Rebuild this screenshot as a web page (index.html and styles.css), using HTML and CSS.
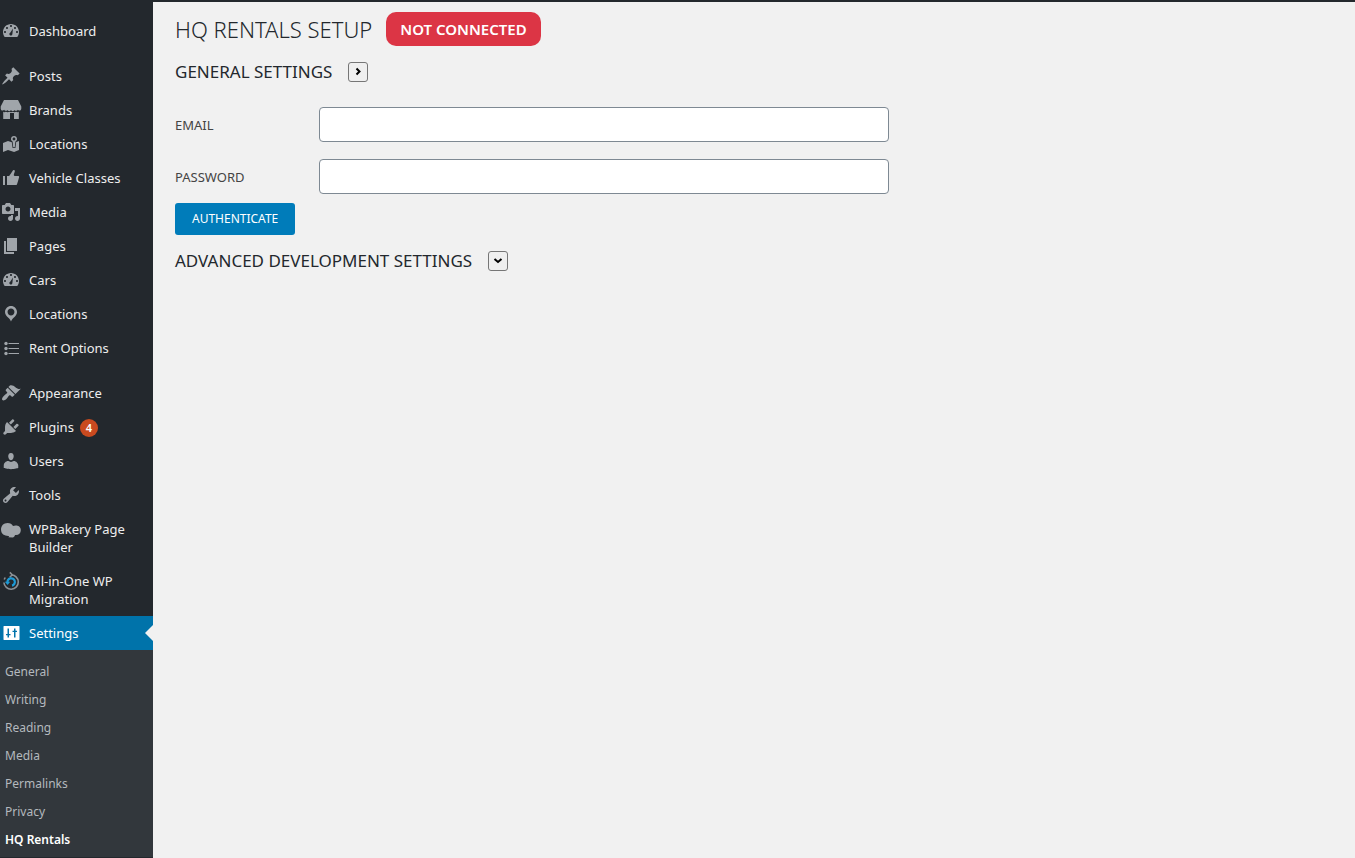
FILE: index.html
```html
<!DOCTYPE html>
<html lang="en">
<head>
<meta charset="utf-8">
<meta name="viewport" content="width=device-width, initial-scale=1">
<title>HQ Rentals Setup</title>
<link rel="stylesheet" href="styles.css">
</head>
<body>
<svg class="defs" width="0" height="0" aria-hidden="true">
  <symbol id="gauge" viewBox="0 0 20 20"><path fill-rule="evenodd" d="M3.76 16h12.48c1.1-1.37 1.76-3.11 1.76-5 0-4.42-3.58-8-8-8s-8 3.58-8 8c0 1.89.66 3.63 1.76 5zM10 4c.55 0 1 .45 1 1s-.45 1-1 1-1-.45-1-1 .45-1 1-1zM6 6c.55 0 1 .45 1 1s-.45 1-1 1-1-.45-1-1 .45-1 1-1zm8 0c.55 0 1 .45 1 1s-.45 1-1 1-1-.45-1-1 .45-1 1-1zM9.200 11.700L12 7.500l-.6 5.300c0 1.100-.6 1.800-1.500 1.800s-1.600-.7-1.600-1.500c0-.6.400-1 .9-1.400zM4 10c.55 0 1 .45 1 1s-.45 1-1 1-1-.45-1-1 .45-1 1-1zm12 0c.55 0 1 .45 1 1s-.45 1-1 1-1-.45-1-1 .45-1 1-1z"/></symbol>
</svg>
<div class="layout">
  <nav class="sidebar" aria-label="Main menu">
    <ul class="menu">
      <li><a class="item" href="#"><svg class="icon" viewBox="0 0 20 20"><use href="#gauge"/></svg><span>Dashboard</span></a></li>
      <li class="group"><a class="item" href="#"><svg class="icon" viewBox="0 0 20 20"><path d="M10.44 3.02l1.82-1.82 6.36 6.35-1.83 1.82c-1.05-.68-2.48-.57-3.41.36l-.75.75c-.92.93-1.04 2.35-.35 3.41l-1.83 1.82-2.41-2.41-2.8 2.79c-.42.42-3.38 2.71-3.8 2.29s1.86-3.39 2.28-3.81l2.79-2.79L4.1 9.36l1.83-1.82c1.05.69 2.48.57 3.4-.36l.75-.75c.93-.92 1.05-2.35.36-3.41z"/></svg><span>Posts</span></a></li>
      <li><a class="item" href="#"><svg class="icon" viewBox="0 0 20 20"><path d="M3 0h14l3.300 6.500v2c0 1.200-.8 2.100-1.700 2.100s-1.500-.4-1.700-.8c-.2.500-.8 1-1.700 1s-1.500-.4-1.800-.9c-.2.600-.8 1.100-1.700 1.100s-1.500-.5-1.700-1c-.2.500-.8 1-1.700 1s-1.500-.5-1.700-1.100c-.3.500-.9.900-1.800.9s-1.500-.5-1.700-1c-.2.400-.8.800-1.700.800S-.3 9.700-.3 8.500v-2z"/><path d="M2.200 11.800c1 .5 1.900.4 2.600-.1 1 .6 2.500.7 3.500.1 1 .6 2.400.6 3.400 0 1 .6 2.500.5 3.500-.1.700.5 1.600.6 2.600.1V19H13v-6H9v6H2.200z"/></svg><span>Brands</span></a></li>
      <li><a class="item" href="#"><svg class="icon" viewBox="0 0 20 20"><path fill-rule="evenodd" d="M12.200 13.140L11.600 7.500C10.600 7 10 6 10 5c0-1.700 1.300-3 3-3s3 1.300 3 3c0 1-.6 2-1.600 2.500l-.6 5.640zM13 3.600c-.8 0-1.400.6-1.400 1.400s.6 1.400 1.400 1.400 1.400-.6 1.400-1.400-.6-1.400-1.400-1.400z"/><path d="M15.200 8L18 6.970v9L13.120 18 7 15.970l-5 2v-9l5-2 3.800 1.230.8 5.700h2.800z"/></svg><span>Locations</span></a></li>
      <li><a class="item" href="#"><svg class="icon" viewBox="0 0 20 20"><path d="M12.720 2c.15-.02.26.02.41.07.56.19.83.79.66 1.350-.17.55-1 3.040-1 3.580 0 .53.75 1 1.350 1h3c.6 0 1 .4 1 1s-2 7-2 7c-.17.39-.55 1-1 1H6V8h2.140c.41-.41 3.300-4.710 3.580-5.270.21-.41.6-.68 1-.73zM2 8h2v9H2V8z"/></svg><span>Vehicle Classes</span></a></li>
      <li><a class="item" href="#"><svg class="icon" viewBox="0 0 20 20"><path fill-rule="evenodd" d="M13 11V4c0-.55-.45-1-1-1h-1.670L9 1H5L3.670 3H2c-.55 0-1 .45-1 1v7c0 .55.45 1 1 1h10c.55 0 1-.45 1-1zM7 4.500c1.380 0 2.500 1.120 2.500 2.500S8.380 9.500 7 9.500 4.500 8.380 4.500 7 5.620 4.500 7 4.500zM14 6h5v10.500c0 1.380-1.120 2.500-2.500 2.500S14 17.880 14 16.500s1.120-2.500 2.500-2.500c.17 0 .34.02.5.05V9h-3V6zm-4 8.050V13h2v3.500c0 1.380-1.120 2.500-2.500 2.500S7 17.880 7 16.500 8.120 14 9.500 14c.17 0 .34.02.5.05z"/></svg><span>Media</span></a></li>
      <li><a class="item" href="#"><svg class="icon" viewBox="0 0 20 20"><path d="M6 15V2h10v13H6zm-1 1h8v2H3V5h2v11z"/></svg><span>Pages</span></a></li>
      <li><a class="item" href="#"><svg class="icon" viewBox="0 0 20 20"><use href="#gauge"/></svg><span>Cars</span></a></li>
      <li><a class="item" href="#"><svg class="icon" viewBox="0 0 20 20"><path fill-rule="evenodd" d="M10 2C6.690 2 4 4.690 4 8c0 2.020 1.170 3.710 2.530 4.890.43.37 1.180.96 1.850 1.830.74.97 1.410 2.010 1.620 2.710.21-.7.88-1.740 1.620-2.710.67-.87 1.420-1.460 1.850-1.830C14.830 11.710 16 10.020 16 8c0-3.310-2.690-6-6-6zm0 2.560c1.900 0 3.440 1.540 3.440 3.440S11.900 11.440 10 11.440 6.560 9.900 6.560 8 8.100 4.560 10 4.560z"/></svg><span>Locations</span></a></li>
      <li><a class="item" href="#"><svg class="icon" viewBox="0 0 20 20"><path d="M7.500 5H18v1H7.500zM7.500 10H18v1H7.500zM7.500 15H18v1H7.500z"/><circle cx="5" cy="5.500" r="1.700"/><circle cx="5" cy="10.500" r="1.700"/><circle cx="5" cy="15.500" r="1.700"/></svg><span>Rent Options</span></a></li>
      <li class="group"><a class="item" href="#"><svg class="icon" viewBox="0 0 20 20"><path d="M14.480 11.060L7.410 3.990l1.500-1.500c.5-.56 2.300-.47 3.510.32 1.210.8 1.430 1.280 2.910 2.100 1.180.64 2.450 1.260 4.450.85zm-.71.71L6.700 4.700 4.930 6.470c-.39.39-.39 1.020 0 1.410l1.060 1.060c.39.39.39 1.030 0 1.420-.6.6-1.430 1.110-2.210 1.690-.35.26-.7.53-1.010.84C1.430 14.230.4 16.080 1.400 17.070c.99 1 2.840-.03 4.180-1.360.31-.31.58-.66.85-1.020.57-.78 1.080-1.610 1.690-2.210.39-.39 1.020-.39 1.410 0l1.060 1.060c.39.39 1.020.39 1.410 0z"/></svg><span>Appearance</span></a></li>
      <li><a class="item" href="#"><svg class="icon" viewBox="0 0 20 20"><path d="M13.110 4.360L9.870 7.600 8 5.730l3.240-3.240c.35-.34 1.050-.2 1.560.32.52.51.66 1.210.31 1.550zm-8 1.770l.91-1.120 9.010 9.010-1.190.84c-.71.71-2.630 1.160-3.820 1.160H6.140L4.900 17.260c-.59.59-1.540.59-2.120 0-.59-.58-.59-1.530 0-2.120l1.240-1.240v-3.880c0-1.130.4-3.190 1.090-3.890zm7.260 3.970l3.240-3.240c.34-.35 1.040-.21 1.550.31.52.51.66 1.210.31 1.550l-3.240 3.250z"/></svg><span>Plugins</span><span class="count">4</span></a></li>
      <li><a class="item" href="#"><svg class="icon" viewBox="0 0 20 20"><path d="M10 9.250c-2.270 0-2.730-3.440-2.730-3.440C7 4.020 7.820 2 9.970 2c2.160 0 2.980 2.020 2.710 3.810 0 0-.41 3.440-2.680 3.440zM7.300 10L10 11.100 12.720 10c2.390 0 4.520 2.330 4.520 4.530v2.490s-3.650 1.130-7.240 1.130c-3.650 0-7.240-1.130-7.240-1.130v-2.490c0-2.250 1.940-4.530 4.540-4.530z"/></svg><span>Users</span></a></li>
      <li><a class="item" href="#"><svg class="icon" viewBox="0 0 20 20"><path fill-rule="evenodd" d="M16.680 9.770c-1.340 1.340-3.300 1.670-4.950.99l-5.410 6.520c-.99.99-2.590.99-3.580 0s-.99-2.590 0-3.570l6.520-5.420c-.68-1.650-.35-3.610.99-4.950 1.280-1.280 3.120-1.620 4.720-1.060l-2.890 2.890 2.820 2.820 2.860-2.870c.53 1.580.18 3.390-1.080 4.650zM3.810 16.210c.4.39 1.040.39 1.430 0 .4-.4.4-1.040 0-1.430-.39-.4-1.030-.4-1.430 0-.39.39-.39 1.030 0 1.430z"/></svg><span>Tools</span></a></li>
      <li><a class="item" href="#"><svg class="icon" viewBox="0 0 20 20"><path d="M6.500 4C9.300 4 11 5.200 12 7c3-1.200 7.800-.4 7.800 4.200 0 3.500-2.600 5.300-5.800 4.800-.2 1.200-.9 2-2 2.500l-4.700-.2c.3-.4.700-.8.800-1.400C4 17.200 0 15.300 0 10.500 0 6.800 2.800 4 6.500 4z"/></svg><span>WPBakery Page Builder</span></a></li>
      <li><a class="item" href="#"><svg class="icon stroked" viewBox="0 0 20 20"><path stroke-width="1.600" d="M10 3.800A7.200 7.200 0 1 1 2.900 11.500M8.800 1.400l2.400 2.400-2.400 2.400M3.200 8.500l1-2"/><path class="accent" stroke-width="2.200" d="M6.600 12A3.700 3.700 0 1 1 11 14.600"/><path class="accent solid" d="M3.800 10.800h5.400l-2.600 3.200z"/></svg><span>All-in-One WP Migration</span></a></li>
      <li>
        <a class="item current" href="#"><svg class="icon" viewBox="0 0 20 20"><path fill-rule="evenodd" d="M3 3h15c.3 0 .5.200.5.500v13c0 .3-.2.500-.5.500H3c-.3 0-.5-.2-.5-.5v-13c0-.3.200-.5.500-.5zM6.500 5.500V11H5v1.200h1.500v2.300H8v-2.300h1.500V11H8V5.500zM13 5.500v2.300h-1.500V9H13v5.500h1.500V9H16V7.800h-1.500V5.500z"/></svg><span>Settings</span></a>
        <ul class="submenu">
          <li><a href="#">General</a></li>
          <li><a href="#">Writing</a></li>
          <li><a href="#">Reading</a></li>
          <li><a href="#">Media</a></li>
          <li><a href="#">Permalinks</a></li>
          <li><a href="#">Privacy</a></li>
          <li><a class="active" href="#" aria-current="page">HQ Rentals</a></li>
        </ul>
      </li>
    </ul>
  </nav>
  <main class="content">
    <header class="heading">
      <h1>HQ RENTALS SETUP</h1>
      <span class="status">NOT CONNECTED</span>
    </header>
    <form class="setup">
      <div class="section">
        <h2>GENERAL SETTINGS</h2>
        <button class="toggle" type="button" aria-label="Toggle general settings"><svg width="18" height="18" viewBox="0 0 18 18"><path d="M7.500 5.500L10.500 8.500L7.500 11.500"/></svg></button>
      </div>
      <div class="fields">
        <div class="field"><label for="email">EMAIL</label><input id="email" type="email"></div>
        <div class="field"><label for="password">PASSWORD</label><input id="password" type="password"></div>
      </div>
      <button class="primary" type="submit">AUTHENTICATE</button>
      <div class="section">
        <h2>ADVANCED DEVELOPMENT SETTINGS</h2>
        <button class="toggle" type="button" aria-label="Toggle advanced settings"><svg width="18" height="18" viewBox="0 0 18 18"><path d="M5.500 7L9 10L12.500 7"/></svg></button>
      </div>
    </form>
  </main>
</div>
</body>
</html>
```

FILE: styles.css
```css
* {
  box-sizing: border-box;
}

body {
  margin: 0;
  background: #f1f1f1;
  color: #23282d;
  font-family: "Noto Sans", "Open Sans", sans-serif;
  font-size: 13px;
}

.defs {
  position: absolute;
}

.layout {
  display: flex;
  min-height: 100vh;
}

.sidebar {
  flex: 0 0 153px;
  padding-top: 14px;
  background: #23282d;
}

.menu,
.submenu {
  margin: 0;
  padding: 0;
  list-style: none;
}

.group {
  margin-top: 11px;
}

.item {
  position: relative;
  display: flex;
  gap: 8px;
  padding: 8px 16px 8px 1px;
  color: #eee;
  line-height: 18px;
  text-decoration: none;
}

.icon {
  flex: none;
  width: 20px;
  height: 20px;
  margin: -1px 0;
  overflow: visible;
  fill: #a0a5aa;
}

.stroked {
  fill: none;
  stroke: #8b9095;
}

.accent {
  stroke: #1c9ad6;
}

.solid {
  fill: #1c9ad6;
  stroke: none;
}

.count {
  width: 18px;
  height: 18px;
  margin: 1px 0 -1px -2px;
  border-radius: 9px;
  background: #ca4a1f;
  color: #fff;
  font-size: 11px;
  font-weight: 600;
  text-align: center;
}

.current {
  background: #0073aa;
  color: #fff;
}

.current .icon {
  fill: #fff;
}

.current::after {
  content: "";
  position: absolute;
  top: 50%;
  right: 0;
  margin-top: -8px;
  border: 8px solid transparent;
  border-left-width: 0;
  border-right-color: #f1f1f1;
}

.submenu {
  padding: 8px 0 3px;
  background: #32373c;
}

.submenu a {
  display: block;
  padding: 5px;
  color: #b4b9be;
  font-size: 12px;
  line-height: 18px;
  text-decoration: none;
}

.submenu .active {
  color: #fff;
  font-weight: 600;
}

.content {
  flex: 1;
  min-width: 0;
  padding: 10px 22px;
  border-top: 2px solid #23282d;
}

.heading {
  display: flex;
  gap: 14px;
  align-items: center;
}

h1,
h2 {
  margin: 0;
  font-weight: 400;
}

h1 {
  font-size: 22px;
  font-weight: 300;
  line-height: 34px;
}

.status {
  padding: 0 14px;
  border-radius: 10px;
  background: #dc3545;
  color: #fff;
  font-size: 15px;
  font-weight: 600;
  line-height: 34px;
}

.section {
  display: flex;
  gap: 16px;
  align-items: center;
  margin-top: 16px;
}

h2 {
  font-size: 17px;
  line-height: 20px;
}

.toggle {
  display: flex;
  width: 20px;
  height: 20px;
  padding: 0;
  border: 1px solid #767676;
  border-radius: 3px;
  background: #efefef;
}

.toggle path {
  fill: none;
  stroke: #000;
  stroke-width: 2;
}

.fields {
  display: grid;
  gap: 17px;
  max-width: 714px;
  margin: 25px 0 9px;
}

.field {
  display: grid;
  grid-template-columns: 144px 1fr;
  align-items: center;
  color: #444;
}

.field input {
  width: 100%;
  height: 35px;
  padding: 0 8px;
  border: 1px solid #7e8993;
  border-radius: 4px;
  background: #fff;
  font: inherit;
}

.primary {
  display: block;
  padding: 0 17px;
  border: 0;
  border-radius: 3px;
  background: #007cba;
  color: #fff;
  font: inherit;
  font-size: 12px;
  line-height: 32px;
}
```
